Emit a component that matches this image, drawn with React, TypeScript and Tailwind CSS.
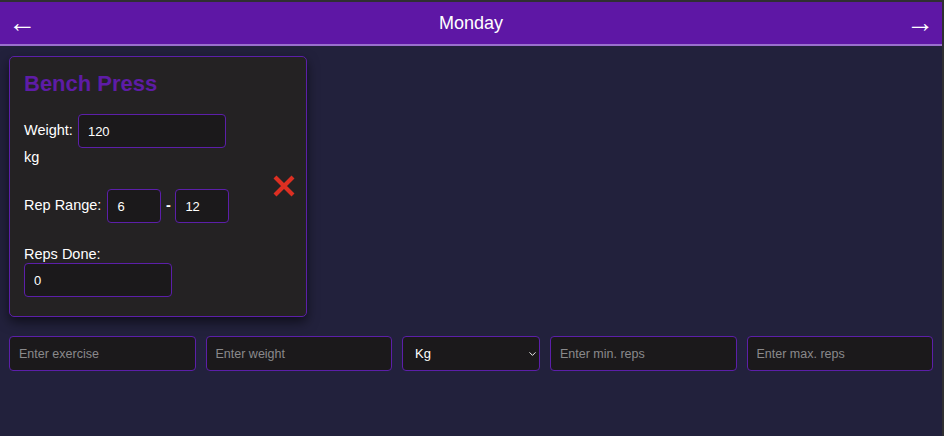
import React, { useState } from "react";
import { ChevronDown } from "lucide-react";

const inputBase =
  "bg-[#1b191b] border border-[#5c1fa9] rounded-[4px] text-white outline-none";

function CloseIcon() {
  return (
    <svg width="24" height="24" viewBox="0 0 24 24" aria-hidden="true">
      <path
        d="M3 3 L21 21 M21 3 L3 21"
        stroke="#dd2f22"
        strokeWidth="4.2"
        strokeLinecap="butt"
      />
    </svg>
  );
}

export default function App() {
  const [weight, setWeight] = useState("120");
  const [minReps, setMinReps] = useState("6");
  const [maxReps, setMaxReps] = useState("12");
  const [done, setDone] = useState("0");

  return (
    <div
      className="min-h-[436px] bg-[#22213c] border-t-2 border-r-2 border-[#2f2f31]"
      style={{ fontFamily: '"Liberation Sans", Arial, sans-serif' }}
    >
      {/* day header */}
      <div className="h-[44px] bg-[#5e17a5] border-b-2 border-[#9a70cd] flex items-center justify-between px-[8px] text-white">
        <button className="text-[28px] leading-none -mt-[1px]">←</button>
        <h1 className="text-[18px]">Monday</h1>
        <button className="text-[28px] leading-none -mt-[1px]">→</button>
      </div>

      <div className="px-[9px] pt-[10px]">
        {/* exercise card */}
        <div className="w-[298px] bg-[#242223] border border-[#5c1fa9] rounded-[5px] shadow-[0_5px_12px_rgba(0,0,0,0.55)] flex items-center pl-[14px] pr-[10px] pt-[14px] pb-[19px]">
          <div className="flex-1 text-white text-[14.5px]">
            <h2 className="text-[22px] font-bold text-[#5e1ca6] leading-[26px]">
              Bench Press
            </h2>

            <div className="mt-[17px]">
              <div className="flex items-center gap-[5px]">
                <span>Weight:</span>
                <input
                  value={weight}
                  onChange={(e) => setWeight(e.target.value)}
                  className={`${inputBase} w-[148px] h-[34px] px-[9px] text-[13px]`}
                />
              </div>
              <div className="leading-[18px]">kg</div>
            </div>

            <div className="mt-[23px] flex items-center">
              <span>Rep Range:</span>
              <input
                value={minReps}
                onChange={(e) => setMinReps(e.target.value)}
                className={`${inputBase} ml-[6px] w-[54px] h-[34px] px-[9px] text-[13px]`}
              />
              <span className="w-[14px] text-center font-bold">-</span>
              <input
                value={maxReps}
                onChange={(e) => setMaxReps(e.target.value)}
                className={`${inputBase} w-[54px] h-[34px] px-[9px] text-[13px]`}
              />
            </div>

            <div className="mt-[23px]">
              <div className="leading-[17px]">Reps Done:</div>
              <input
                value={done}
                onChange={(e) => setDone(e.target.value)}
                className={`${inputBase} w-[148px] h-[34px] px-[9px] text-[13px] block`}
              />
            </div>
          </div>

          <button className="mt-[4px]">
            <CloseIcon />
          </button>
        </div>

        {/* add exercise row */}
        <div className="mt-[19px] flex gap-[10px] text-[12.5px]">
          <input
            placeholder="Enter exercise"
            className={`${inputBase} flex-1 min-w-0 h-[35px] px-[9px] placeholder:text-[#8a898b]`}
          />
          <input
            placeholder="Enter weight"
            className={`${inputBase} flex-1 min-w-0 h-[35px] px-[9px] placeholder:text-[#8a898b]`}
          />
          <div className="relative w-[138px]">
            <select
              className={`${inputBase} appearance-none w-full h-[35px] pl-[12px] pr-6 text-[13px]`}
            >
              <option>Kg</option>
              <option>Lbs</option>
            </select>
            <ChevronDown
              className="absolute right-[2px] top-1/2 -translate-y-1/2 text-white pointer-events-none"
              size={11}
              strokeWidth={2}
            />
          </div>
          <input
            placeholder="Enter min. reps"
            className={`${inputBase} flex-1 min-w-0 h-[35px] px-[9px] placeholder:text-[#8a898b]`}
          />
          <input
            placeholder="Enter max. reps"
            className={`${inputBase} flex-1 min-w-0 h-[35px] px-[9px] placeholder:text-[#8a898b]`}
          />
        </div>
      </div>
    </div>
  );
}
